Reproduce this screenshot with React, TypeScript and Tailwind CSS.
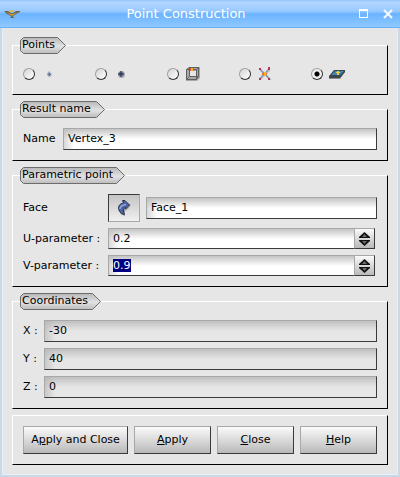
import { useEffect, useRef, type ReactNode } from 'react';

const FIELD =
  'min-w-0 h-[22px] px-1 pb-px leading-4 border border-t-[#a8a8a8] border-l-[#a8a8a8] border-r-[#3a3a3a] border-b-[#3a3a3a] outline-none rounded-none selection:bg-[#000080] selection:text-white';
const WHITE_BG =
  'bg-[linear-gradient(to_right,rgba(190,190,190,.6),rgba(230,230,230,0)_10px),linear-gradient(to_bottom,#c4c4c4,#ffffff_10px)]';
const GREY_BG =
  'bg-[linear-gradient(to_right,rgba(180,180,180,.6),rgba(230,230,230,0)_10px),linear-gradient(to_bottom,#c0c0c0,#e6e6e6_10px)]';
const FRAME = 'min-w-0 border border-t-white border-l-white border-r-black border-b-black px-[10px] pb-[10px]';
const RAISED = 'border border-t-[#a8a8a8] border-l-[#a8a8a8] border-r-[#3a3a3a] border-b-[#3a3a3a] bg-linear-to-b from-[#fbfbfb] to-[#b9b9b9]';

function Group({ title, width, children }: { title: string; width: number; children: ReactNode }) {
  const w = width;
  return (
    <fieldset className={FRAME}>
      <legend className="relative -ml-[3px] h-[17px] pl-[2px] leading-4" style={{ width: w }}>
        <svg className="absolute inset-0" width={w} height="17" viewBox={`0 0 ${w} 17`}>
          <defs>
            <linearGradient id={`tag${w}`} x1="0" y1="0" x2="0" y2="1">
              <stop offset="0" stopColor="#b8b8b8" />
              <stop offset=".55" stopColor="#e2e2e2" />
              <stop offset="1" stopColor="#bcbcbc" />
            </linearGradient>
          </defs>
          <path d={`M3.5 .5H${w - 8.5}L${w - 0.5} 8.5L${w - 8.5} 16.5H3.5L.5 13.5V3.5Z`} fill={`url(#tag${w})`} stroke="#6c6c6c" />
        </svg>
        <span className="relative whitespace-nowrap">{title}</span>
      </legend>
      {children}
    </fieldset>
  );
}

function SmallPoint() {
  return (
    <svg width="16" height="16" viewBox="0 0 16 16">
      <circle cx="8.5" cy="8.5" r="2.5" fill="#c5c8d2" />
      <path d="M8 5.5v5M6 8h4" stroke="#7f88ad" />
      <path d="M8.5 7v3M7 8.5h3" stroke="#6670a0" />
    </svg>
  );
}

function ReferencePoint() {
  return (
    <svg width="16" height="16" viewBox="0 0 16 16">
      <circle cx="8.5" cy="8.5" r="3.5" fill="#a9acb9" />
      <circle cx="8" cy="8" r="2.5" fill="#6d7593" />
      <path d="M8 5v6M5 8h6" stroke="#252c45" />
    </svg>
  );
}

function BoxIcon() {
  return (
    <svg width="16" height="16" viewBox="0 0 16 16" fill="none">
      <path d="M1 4L4 1H15V12L12 15H1Z" fill="#a9a9a9" />
      <path d="M5 5h6v6H5z" fill="#e6e6e6" />
      <path d="M1.500 3.500h10v10h-10zM4.500 1.500h9v9h-9zM1.500 3.500l3-2M11.500 3.500l2-2M11.500 13.500l2-3M1.500 13.500l3-3" stroke="#5f5f5f" />
      <path d="M5 2h4v3H5z" fill="#e2502c" />
      <path d="M6 2h2v3H6z" fill="#ffb01c" />
    </svg>
  );
}

function CrossIcon() {
  return (
    <svg width="16" height="16" viewBox="0 0 16 16">
      <path d="M3 4l11 10M3 14L13 4" stroke="#c4c4c4" strokeWidth="1.500" />
      <path d="M2.500 2.500l10.500 11M2.500 13L12.500 2.500" stroke="#7e93b8" strokeWidth="1.400" />
      <path d="M2 2h2v2H2zM11 1h2v3h-2zM2 12h2v2H2zM11 12h2v2h-2z" fill="#b03a50" />
      <path d="M5 7h5v2H5z" fill="#ef7434" />
      <path d="M7 6h2v4H7z" fill="#ffb41d" />
    </svg>
  );
}

function FaceIcon() {
  return (
    <svg width="18" height="16" viewBox="0 0 18 16">
      <path d="M0 11L6 4H16V6L11 13H0Z" fill="#8c8c8c" />
      <path d="M0 10L5 4H16V6L11 12H0Z" fill="#3c4650" />
      <path d="M2 9L6 5H15L11 9Z" fill="#3f85b5" />
      <path d="M8 5h2v4H8z" fill="#d8cf45" />
      <path d="M7 6h4v1H7z" fill="#ffc928" />
    </svg>
  );
}

function ArrowIcon() {
  return (
    <svg width="16" height="18" viewBox="0 0 16 18">
      <path d="M4 15L9 17L9 12L12 10L15 6L11 4Z" fill="#a2a2a2" />
      <path d="M6.500 1.500H9L13.500 6L9.500 10V8.500C7 9 7 12 8.500 15.500C6 15.500 3 13 2.500 9.500C2.500 6 4.500 4.500 7.500 4Z" fill="#4d63a6" stroke="#2c3450" />
      <path d="M4 10C4 7.500 6.500 6 10 5.500" stroke="#93a7dc" strokeWidth="1.500" fill="none" />
    </svg>
  );
}

function SpinArrows() {
  return (
    <svg width="12" height="14" viewBox="0 0 12 14">
      <path d="M5.500 0L11 5V6H0V5Z" fill="#111" />
      <path d="M5.500 2L8 5H3Z" fill="#6b6b6b" />
      <path d="M5.500 14L11 9V8H0V9Z" fill="#111" />
      <path d="M5.500 12L8 9H3Z" fill="#6b6b6b" />
    </svg>
  );
}

function SpinField({ id, label, value, selected }: { id: string; label: string; value: string; selected?: boolean }) {
  const ref = useRef<HTMLInputElement>(null);
  useEffect(() => {
    if (selected) {
      ref.current?.focus();
      ref.current?.select();
    }
  }, [selected]);
  return (
    <div className="flex items-center pr-[2px]">
      <label htmlFor={id} className="w-[85px] shrink-0 whitespace-nowrap">{label}</label>
      <input ref={ref} id={id} defaultValue={value} className={`${FIELD} ${WHITE_BG} !h-[21px] flex-1 border-r-0`} />
      <button type="button" aria-label={`Step ${label}`} className={`${RAISED} flex h-[21px] w-[21px] shrink-0 items-center justify-center`}>
        <SpinArrows />
      </button>
    </div>
  );
}

const methods = [
  { name: 'Coordinates', icon: <SmallPoint /> },
  { name: 'Reference', icon: <ReferencePoint /> },
  { name: 'Edge', icon: <BoxIcon /> },
  { name: 'Intersection', icon: <CrossIcon /> },
  { name: 'Face', icon: <FaceIcon /> },
];

const RADIO =
  'size-3 shrink-0 appearance-none rounded-full border border-t-[#a0a0a0] border-l-[#a0a0a0] border-r-[#333] border-b-[#333] bg-linear-to-br from-[#d5d5d5] to-white checked:bg-[radial-gradient(circle,#000_2px,#eeeeee_3px)]';

export default function App() {
  return (
    <main className="border-x-2 border-b-2 border-[#cbd9e6] bg-[#e6e6e6] font-['DejaVu_Sans',sans-serif] text-[11px] leading-[14px] text-black shadow-[inset_0_0_0_1px_#e6eff8]">
      <header className="-mx-[2px] flex h-7 items-center border-b border-[#69aef0] bg-[linear-gradient(to_bottom,#8cc4ff,#b3d6ff_2px,#99caff_11px,#6bb3ff_14px,#8fc9ff)] pr-[7px] pl-1 text-white">
        <svg width="16" height="14" viewBox="0 0 16 14">
          <path d="M0 4L4 4L7 6H9L12 4H16V5L12 7L9 9V10L11 11H6L7 10V9L3 7Z" fill="#6f6444" />
          <path d="M2 4.500L7 7H9L13 5L9 8.500H7Z" fill="#cfa040" />
          <path d="M6 3h4v2H6z" fill="#d9bb55" />
        </svg>
        <h1 className="flex-1 pr-[7px] text-center text-[13px] leading-4">Point Construction</h1>
        <button type="button" aria-label="Maximize" className="mr-[15px] size-[9px] border border-t-2 border-white" />
        <button type="button" aria-label="Close window">
          <svg width="10" height="10" viewBox="0 0 10 10"><path d="M1 1l8 8M9 1L1 9" stroke="#f4f8fc" strokeWidth="2.200" /></svg>
        </button>
      </header>
      <form className="flex flex-col gap-[6px] px-[10px] pt-[9px] pb-[10px]" onSubmit={(e) => e.preventDefault()}>
        <Group title="Points" width={46}>
          <div className="grid grid-cols-5 gap-[6px] pt-3 pb-[2px]">
            {methods.map((m, i) => (
              <label key={m.name} className="flex h-4 items-center gap-[6px]">
                <input type="radio" name="method" aria-label={m.name} defaultChecked={i === 4} className={RADIO} />
                {m.icon}
              </label>
            ))}
          </div>
        </Group>
        <Group title="Result name" width={85}>
          <div className="flex items-center pt-[10px]">
            <label htmlFor="name" className="w-10 shrink-0">Name</label>
            <input id="name" defaultValue="Vertex_3" className={`${FIELD} ${WHITE_BG} flex-1`} />
          </div>
        </Group>
        <Group title="Parametric point" width={105}>
          <div className="flex flex-col gap-[6px] pt-[10px]">
            <div className="flex items-center">
              <label htmlFor="face" className="w-[85px] shrink-0">Face</label>
              <button type="button" aria-label="Select face" className="mr-[6px] flex h-7 w-8 shrink-0 items-center justify-center border border-t-[#3a3a3a] border-l-[#3a3a3a] border-r-[#a8a8a8] border-b-[#a8a8a8] bg-linear-to-b from-[#c4c4c4] to-[#f0f0f0]">
                <ArrowIcon />
              </button>
              <input id="face" defaultValue="Face_1" className={`${FIELD} ${WHITE_BG} flex-1`} />
            </div>
            <SpinField id="u" label="U-parameter :" value="0.2" />
            <SpinField id="v" label="V-parameter :" value="0.9" selected />
          </div>
        </Group>
        <Group title="Coordinates" width={81}>
          <div className="flex flex-col gap-[6px] pt-[10px]">
            {[['X', '-30'], ['Y', '40'], ['Z', '0']].map(([axis, value]) => (
              <div key={axis} className="flex items-center">
                <label htmlFor={axis} className="w-[21px] shrink-0 whitespace-nowrap">{axis} :</label>
                <input id={axis} readOnly value={value} className={`${FIELD} ${GREY_BG} flex-1`} />
              </div>
            ))}
          </div>
        </Group>
        <div className={`${FRAME} flex gap-[6px] pt-[10px]`}>
          <button type="button" className={`${RAISED} h-7 w-[105px] shrink-0 whitespace-nowrap`}>A<u>p</u>ply and Close</button>
          <button type="button" className={`${RAISED} h-7 flex-1`}><u>A</u>pply</button>
          <button type="button" className={`${RAISED} h-7 flex-1`}><u>C</u>lose</button>
          <button type="button" className={`${RAISED} h-7 flex-1`}><u>H</u>elp</button>
        </div>
      </form>
    </main>
  );
}
